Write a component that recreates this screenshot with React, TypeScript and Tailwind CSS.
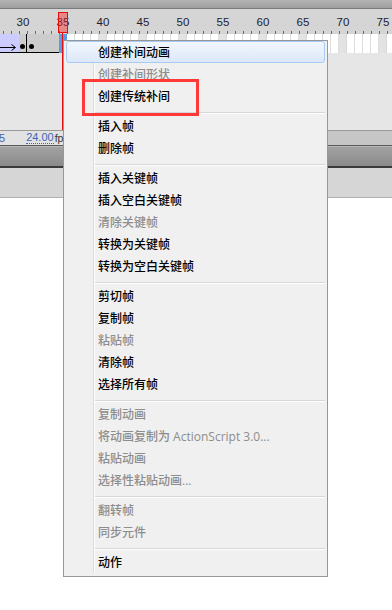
import React from "react";

type Item = { label: string; disabled?: boolean; highlight?: boolean } | "sep";

const items: Item[] = [
  { label: "创建补间动画", highlight: true },
  { label: "创建补间形状", disabled: true },
  { label: "创建传统补间" },
  "sep",
  { label: "插入帧" },
  { label: "删除帧" },
  "sep",
  { label: "插入关键帧" },
  { label: "插入空白关键帧" },
  { label: "清除关键帧", disabled: true },
  { label: "转换为关键帧" },
  { label: "转换为空白关键帧" },
  "sep",
  { label: "剪切帧" },
  { label: "复制帧" },
  { label: "粘贴帧", disabled: true },
  { label: "清除帧" },
  { label: "选择所有帧" },
  "sep",
  { label: "复制动画", disabled: true },
  { label: "将动画复制为 ActionScript 3.0...", disabled: true },
  { label: "粘贴动画", disabled: true },
  { label: "选择性粘贴动画...", disabled: true },
  "sep",
  { label: "翻转帧", disabled: true },
  { label: "同步元件", disabled: true },
  "sep",
  { label: "动作" },
];

const frames: number[] = [];
for (let n = 27; n <= 80; n++) frames.push(n);

function FrameCell({ n }: { n: number }) {
  if (n <= 29) {
    return <div className="w-2 h-full shrink-0 bg-[#ccccff] border-b border-black" />;
  }
  if (n === 30) {
    return (
      <div className="w-2 h-full shrink-0 bg-[#cccccc] border-b border-r border-black flex items-end justify-center pb-[3px]">
        <div className="w-[5px] h-[5px] rounded-full bg-black" />
      </div>
    );
  }
  if (n === 31) {
    return (
      <div className="w-2 h-full shrink-0 bg-[#cccccc] border-b border-black flex items-end justify-center pb-[3px]">
        <div className="w-[5px] h-[5px] rounded-full bg-black" />
      </div>
    );
  }
  if (n <= 34) {
    return <div className="w-2 h-full shrink-0 bg-[#cccccc] border-b border-black" />;
  }
  if (n === 35) {
    return <div className="w-2 h-full shrink-0 bg-[#5a9ae6]" />;
  }
  return (
    <div
      className={
        n % 5 === 0
          ? "w-2 h-full shrink-0 bg-[#e3e3e3] border-r border-[#d8d8d8]"
          : "w-2 h-full shrink-0 bg-white border-r border-[#dedede]"
      }
    />
  );
}

export default function App() {
  return (
    <div
      className="w-[392px] h-[610px] relative overflow-hidden bg-white flex flex-col"
      style={{ fontFamily: '"Liberation Sans", Arial, sans-serif' }}
    >
      {/* top dark bar */}
      <div className="h-[8px] shrink-0 bg-gradient-to-b from-[#b4b4b4] to-[#9e9e9e]" />
      <div className="h-px shrink-0 bg-[#7a7a7a]" />

      {/* ruler */}
      <div className="h-[25px] shrink-0 bg-[#d5d5d5] flex ml-[-5px]">
        {frames.map((n) => (
          <div key={n} className="w-2 shrink-0 flex flex-col">
            <div className="pt-[7px] h-[19px] flex justify-center">
              {n % 5 === 0 ? (
                <span className="text-[11.5px] leading-[12px] text-[#1e1e2e] whitespace-nowrap">{n}</span>
              ) : null}
            </div>
            <div className="flex-1" />
            <div className="h-[3px] w-px bg-[#6a6a6a]" />
          </div>
        ))}
      </div>

      {/* frame row */}
      <div className="h-[19px] shrink-0 flex ml-[-5px] relative">
        {frames.map((n) => (
          <FrameCell key={n} n={n} />
        ))}
        <svg className="absolute left-0 top-0" width="24" height="19" viewBox="0 0 24 19">
          <line x1="0" y1="13.5" x2="20" y2="13.5" stroke="#000" strokeWidth="1" />
          <path d="M16.5 10.5 L20.5 13.5 L16.5 16.5" fill="none" stroke="#000" strokeWidth="1" />
        </svg>
      </div>

      {/* empty layer area */}
      <div className="h-[77px] shrink-0 bg-[#e6e6e6]" />

      {/* status row */}
      <div className="h-px shrink-0 bg-[#9a9a9a]" />
      <div className="h-[14px] shrink-0 flex">
        <div className="w-[63px] bg-[#e2e2e2] flex items-end pb-[1px] text-[11px] leading-[12px] overflow-hidden whitespace-nowrap">
          <span className="text-[#3d66b8] ml-[-1px]">5</span>
          <span className="text-[#3d66b8] ml-[21px] border-b border-dotted border-[#3d66b8] leading-[11px]">24.00</span>
          <span className="text-[#333] text-[10.5px] ml-px">fps</span>
        </div>
        <div className="flex-1 bg-[#c6c6c6]" />
      </div>
      <div className="h-px shrink-0 bg-[#5a5a5a]" />
      <div className="h-px shrink-0 bg-[#b8b8b8]" />
      <div className="h-[19px] shrink-0 bg-gradient-to-b from-[#a2a2a2] to-[#8a8a8a]" />
      <div className="h-[2px] shrink-0 bg-[#3a3a3a]" />
      <div className="h-[29px] shrink-0 bg-[#d6d6d6]" />
      <div className="h-px shrink-0 bg-[#b0b0b0]" />
      <div className="flex-1 bg-white" />

      {/* playhead */}
      <div className="absolute left-[58px] top-[12px] w-[10px] h-[21px] bg-[rgba(255,40,40,0.45)] border border-[#e01010]" />
      <div className="absolute left-[62px] top-[33px] w-px h-[97px] bg-[#e01010]" />

      {/* context menu */}
      <div
        className="absolute left-[63px] top-[40px] w-[265px] border border-[#979797] bg-[#f0f0f0] pb-[3px] flex flex-col"
        style={{ fontFamily: '"Open Sans", "Noto Sans CJK SC", sans-serif' }}
      >
        {items.map((it, i) => {
          if (it === "sep") {
            return (
              <div key={i} className="h-[8px] flex">
                <div className="w-[29px]" />
                <div className="w-px bg-[#d9d9d9]" />
                <div className="w-px bg-white" />
                <div className="flex-1 pr-[2px] pt-[5px]">
                  <div className="h-px bg-[#d7d7d7]" />
                  <div className="h-px bg-white" />
                </div>
              </div>
            );
          }
          if (it.highlight) {
            return (
              <div
                key={i}
                className="h-[22px] mx-[2px] rounded-[3px] border border-[#a8cbf3] bg-gradient-to-b from-[#f2f7fd] to-[#dce8f8] flex items-center pl-[31px] pt-[2px] text-[12px] font-medium text-black whitespace-nowrap"
              >
                {it.label}
              </div>
            );
          }
          return (
            <div key={i} className="h-[22px] flex">
              <div className="w-[29px]" />
              <div className="w-px bg-[#d9d9d9]" />
              <div className="w-px bg-white" />
              <div
                className={
                  it.disabled
                    ? "flex-1 pl-[3px] pt-[2px] flex items-center text-[12px] font-medium text-[#8d8d8d] whitespace-nowrap"
                    : "flex-1 pl-[3px] pt-[2px] flex items-center text-[12px] font-medium text-black whitespace-nowrap"
                }
              >
                {it.label}
              </div>
            </div>
          );
        })}
      </div>

      {/* red annotation box */}
      <div className="absolute left-[82px] top-[79px] w-[117px] h-[37px] border-[3px] border-[#ff3838]" />
    </div>
  );
}
